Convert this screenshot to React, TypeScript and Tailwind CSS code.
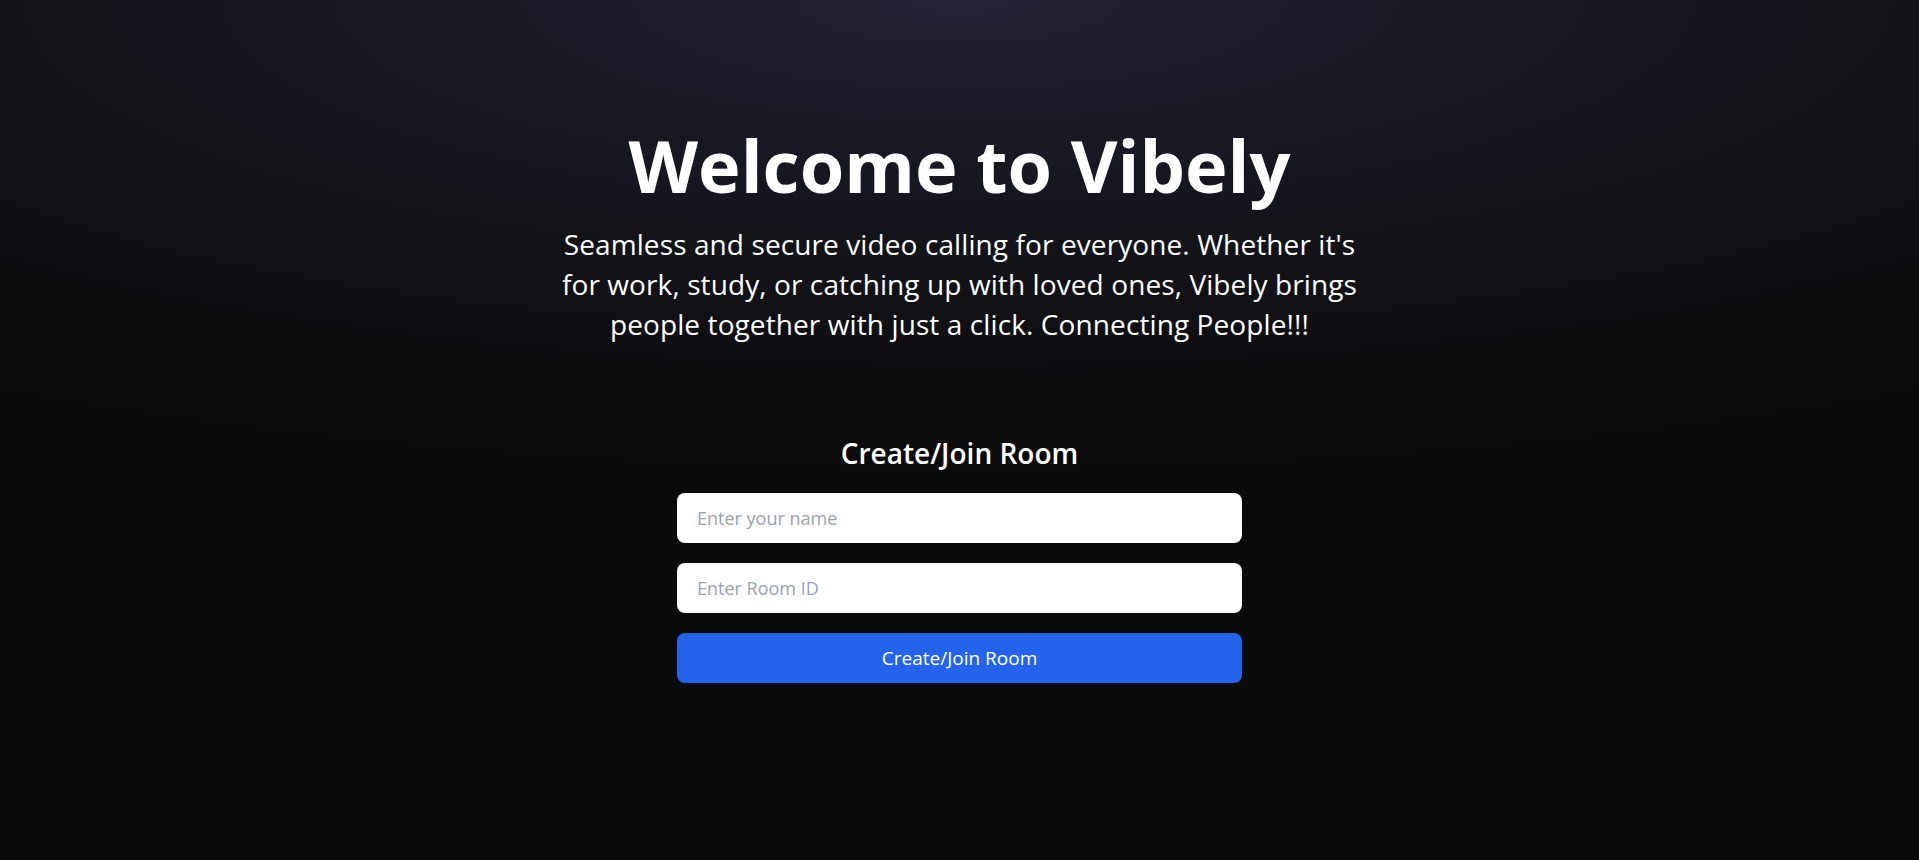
import { useState } from "react";

export default function App() {
  const [name, setName] = useState("");
  const [roomId, setRoomId] = useState("");

  return (
    <div
      className="min-h-screen w-full flex flex-col items-center text-white bg-[radial-gradient(ellipse_90%_55%_at_50%_0%,#222232_0%,#15151d_45%,#0a0a0a_100%)]"
      style={{ fontFamily: '"Open Sans", "Noto Sans", sans-serif' }}
    >
      {/* Hero */}
      <h1 className="mt-[129px] text-[72px] leading-[72px] font-bold">
        Welcome to Vibely
      </h1>
      <p className="mt-[23px] w-[840px] text-center text-[28px] leading-[40px] tracking-[0.1px]">
        Seamless and secure video calling for everyone. Whether it's
        <br />
        for work, study, or catching up with loved ones, Vibely brings
        <br />
        people together with just a click. Connecting People!!!
      </p>

      {/* Room form */}
      <div className="mt-[91px] w-[565px] flex flex-col items-center">
        <h2 className="text-[28px] leading-[36px] font-semibold">Create/Join Room</h2>
        <input
          value={name}
          onChange={(e) => setName(e.target.value)}
          placeholder="Enter your name"
          className="mt-[22px] w-full h-[50px] rounded-lg bg-white px-5 text-[18px] text-gray-900 placeholder:text-[#9ca3af] outline-none"
        />
        <input
          value={roomId}
          onChange={(e) => setRoomId(e.target.value)}
          placeholder="Enter Room ID"
          className="mt-5 w-full h-[50px] rounded-lg bg-white px-5 text-[18px] text-gray-900 placeholder:text-[#9ca3af] outline-none"
        />
        <button className="mt-5 w-full h-[50px] rounded-lg bg-[#2563eb] text-[19px] text-white">
          Create/Join Room
        </button>
      </div>
    </div>
  );
}
